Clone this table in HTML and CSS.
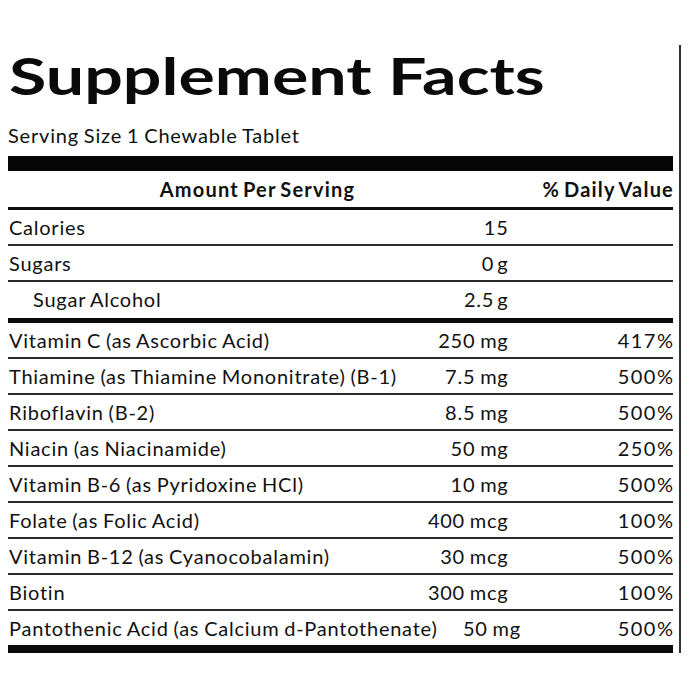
FILE: index.html
```html
<!DOCTYPE html>
<html>
<head>
<meta charset="utf-8">
<link rel="stylesheet" href="styles.css">
</head>
<body>
<div class="page">
  <div class="label">
    <h1 class="title">Supplement Facts</h1>
    <div class="serving">Serving Size 1 Chewable Tablet</div>
    <div class="bar-thick"></div>
    <div class="head">
      <div class="head-amt">Amount Per Serving</div>
      <div class="head-dv">% Daily Value</div>
    </div>
    <div class="row"><div class="name">Calories</div><div class="amt">15</div><div class="dv"></div></div>
    <div class="row"><div class="name">Sugars</div><div class="amt">0&#8201;g</div><div class="dv"></div></div>
    <div class="row row-sep"><div class="name indent">Sugar Alcohol</div><div class="amt">2.5&#8201;g</div><div class="dv"></div></div>
    <div class="row"><div class="name">Vitamin C (as Ascorbic Acid)</div><div class="amt">250 mg</div><div class="dv">417%</div></div>
    <div class="row"><div class="name">Thiamine (as Thiamine Mononitrate) (B-1)</div><div class="amt">7.5 mg</div><div class="dv">500%</div></div>
    <div class="row"><div class="name">Riboflavin (B-2)</div><div class="amt">8.5 mg</div><div class="dv">500%</div></div>
    <div class="row"><div class="name">Niacin (as Niacinamide)</div><div class="amt">50 mg</div><div class="dv">250%</div></div>
    <div class="row"><div class="name">Vitamin B-6 (as Pyridoxine HCl)</div><div class="amt">10 mg</div><div class="dv">500%</div></div>
    <div class="row"><div class="name">Folate (as Folic Acid)</div><div class="amt">400 mcg</div><div class="dv">100%</div></div>
    <div class="row"><div class="name">Vitamin B-12 (as Cyanocobalamin)</div><div class="amt">30 mcg</div><div class="dv">500%</div></div>
    <div class="row"><div class="name">Biotin</div><div class="amt">300 mcg</div><div class="dv">100%</div></div>
    <div class="row row-last"><div class="name">Pantothenic Acid (as Calcium d-Pantothenate)</div><div class="amt">50 mg</div><div class="dv">500%</div></div>
  </div>
  <div class="edge"></div>
</div>
</body>
</html>
```
FILE: styles.css
```css
* { box-sizing: border-box; }
html, body {
  margin: 0;
  padding: 0;
  background: #fff;
}
body {
  font-family: Lato, "Open Sans", sans-serif;
  color: #111;
}
.page {
  display: flex;
  align-items: stretch;
  padding-top: 45px;
  width: 690px;
}
.label {
  margin-left: 8px;
  width: 665px;
}
.edge {
  width: 2px;
  margin-left: 6px;
  background: #333;
}
.title {
  width: max-content;
  margin: 4px 0 0 1px;
  font-size: 52px;
  line-height: 52px;
  font-weight: 700;
  letter-spacing: 0;
  color: #0a0a0a;
  white-space: nowrap;
  transform: scaleX(1.31);
  transform-origin: left center;
}
.serving {
  margin-top: 22px;
  font-size: 20px;
  line-height: 24px;
  letter-spacing: 0.8px;
  word-spacing: -1px;
}
.bar-thick {
  margin-top: 9px;
  height: 15px;
  background: #050505;
}
.head {
  display: flex;
  height: 39px;
  border-bottom: 3px solid #111;
  font-weight: 700;
  font-size: 20px;
  line-height: 36px;
  letter-spacing: 1.2px;
  word-spacing: -2px;
}
.head-amt {
  flex: 1;
  text-align: center;
  padding-right: 167px;
}
.head-dv {
  width: 167px;
  text-align: right;
  margin-left: -167px;
  margin-right: -1px;
}
.row {
  display: flex;
  height: 36px;
  border-bottom: 2px solid #2a2a2a;
  font-size: 20px;
  line-height: 34px;
  letter-spacing: 0.75px;
  word-spacing: -1px;
}
.row-sep {
  height: 41px;
  border-bottom: 5px solid #0a0a0a;
}
.row-last {
  height: 42px;
  border-bottom: 8px solid #0a0a0a;
}
.name {
  flex: 1;
  white-space: nowrap;
  padding-left: 1px;
}
.indent {
  padding-left: 25px;
}
.amt {
  width: 90px;
  text-align: right;
  margin-right: -1px;
}
.dv {
  width: 167px;
  text-align: right;
  letter-spacing: 1.5px;
  margin-right: -1.5px;
}
```
